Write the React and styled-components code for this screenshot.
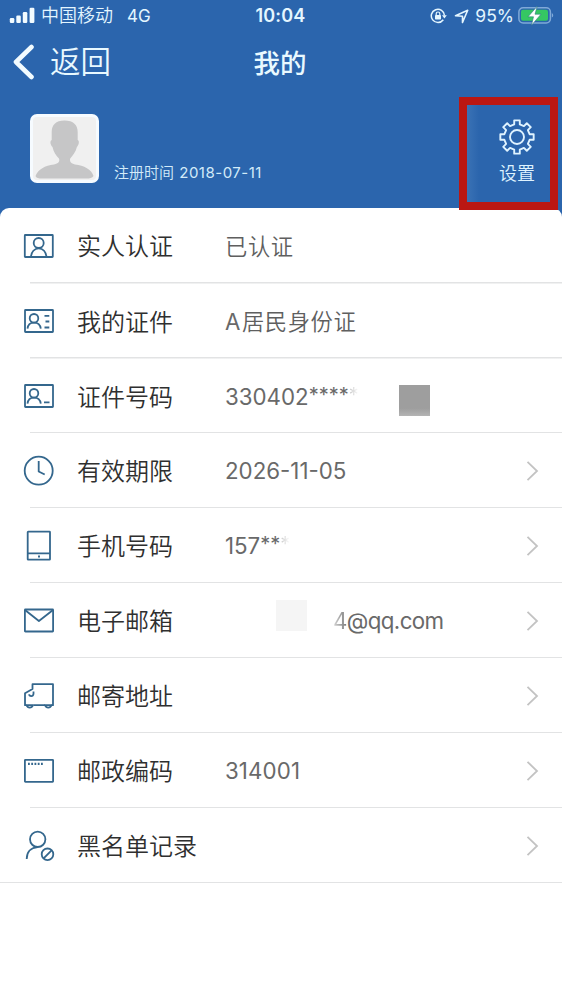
import styled, { createGlobalStyle } from 'styled-components';

const GlobalStyle = createGlobalStyle`
  * {
    box-sizing: border-box;
  }
  body {
    margin: 0;
    background: #fff;
    font-family: Inter, "Noto Sans CJK SC", sans-serif;
  }
`;

const Page = styled.div`
  width: 562px;
  height: 1000px;
  overflow: hidden;
  background: #2b65ad;
  display: flex;
  flex-direction: column;
`;

const StatusBar = styled.div`
  height: 32px;
  padding: 0 8px 0 9px;
  display: grid;
  grid-template-columns: 1fr auto 1fr;
  align-items: center;
  color: #e4f6ff;
  font-size: 17px;
  line-height: 32px;
`;

const StatusGroup = styled.div`
  display: flex;
  align-items: center;
  justify-content: ${(props) => (props.$end ? 'flex-end' : 'flex-start')};
`;

const Carrier = styled.span`
  margin-left: 6px;
  font-size: 18px;
  font-weight: 350;
`;

const Network = styled.span`
  margin-left: 14px;
  font-size: 17px;
`;

const Clock = styled.span`
  margin-right: 2px;
  font-size: 18px;
  font-weight: 600;
  letter-spacing: 0.2px;
`;

const BatteryText = styled.span`
  margin: 0 4px 0 6px;
  font-size: 17.5px;
`;

const NavBar = styled.div`
  height: 64px;
  padding: 0 15px 5px 13px;
  display: grid;
  grid-template-columns: 1fr auto 1fr;
  align-items: center;
  color: #e9f9ff;
  line-height: 58px;
`;

const Back = styled.div`
  display: flex;
  align-items: center;
  gap: 16px;
  font-size: 30.5px;
  font-weight: 350;
`;

const Title = styled.div`
  padding-top: 2px;
  font-size: 26.5px;
  font-weight: 500;
`;

const Profile = styled.div`
  height: 112px;
  padding-left: 30px;
  display: flex;
`;

const Avatar = styled.div`
  width: 69px;
  height: 69px;
  margin-top: 18px;
  border: 3px solid #f6fbff;
  border-radius: 7px;
  background: #f0f0f0;
  overflow: hidden;

  > svg {
    display: block;
  }
`;

const Registered = styled.div`
  margin: 66px 0 0 15px;
  color: #d3ebf9;
  font-size: 15px;
  font-weight: 350;
  line-height: 22px;
  white-space: pre;
`;

const RegisteredDate = styled.span`
  margin-left: 1px;
  font-weight: 400;
  letter-spacing: 0.5px;
`;

const Settings = styled.div`
  width: 99px;
  height: 113px;
  margin: 1px 4px 0 auto;
  border: 8px solid #bb1712;
  background: linear-gradient(90deg, #3a72b5, #2b65ad 12px);
  display: flex;
  flex-direction: column;
  align-items: center;
  padding: 14px 0 0 17px;
  position: relative;
  z-index: 1;
  color: #dff3ff;
  font-size: 18px;
  font-weight: 350;
  line-height: 24px;

  > svg {
    margin-bottom: 7px;
  }
`;

const Sheet = styled.div`
  flex: 1;
  border-radius: 9px 9px 0 0;
  background: #fff;
`;

const Row = styled.div`
  height: 74.95px;
  display: flex;
  padding-left: 23px;
  background: linear-gradient(#e2e3e4, #e2e3e4) right bottom / ${(props) => (props.$last ? '562px' : '532px')} 1.5px no-repeat;

  &:first-child {
    height: 75.6px;
  }
`;

const RowIcon = styled.div`
  width: 54px;
  display: flex;
  align-items: center;
`;

const Label = styled.div`
  width: 148px;
  color: #2f2f2f;
  font-size: 24px;
  font-weight: 350;
  line-height: 78px;
  white-space: nowrap;
`;

const Value = styled.div`
  flex: 1;
  display: flex;
  align-items: center;
  padding-top: 1px;
  color: #696969;
  font-size: 22.3px;
  line-height: 74px;
  letter-spacing: ${(props) => props.$spacing || '0'};
  white-space: nowrap;
`;

const Chinese = styled.span`
  padding-top: 1px;
  color: #5f5f5f;
  font-weight: 350;
  letter-spacing: 0.6px;
`;

const Stars = styled.span`
  margin-top: -4px;
  font-size: 20px;
`;

const Faded = styled.span`
  color: transparent;
  background: linear-gradient(90deg, ${(props) => props.$from}, ${(props) => props.$to});
  background-clip: text;
`;

const FadedStar = styled(Faded)`
  margin-top: -4px;
  font-size: 20px;
`;

const Mask = styled.span`
  width: 31px;
  height: 31px;
  margin: ${(props) => props.$margin};
  background: ${(props) => props.$fill};
`;

const Arrow = styled.div`
  width: 36px;
  display: flex;
  align-items: center;
`;

function Line({ children }) {
  return (
    <svg width="32" height="32" viewBox="0 0 32 32" fill="none" stroke="#34678d" strokeWidth="1.8" strokeLinejoin="round">
      {children}
    </svg>
  );
}

const icons = {
  person: (
    <Line>
      <rect x="1.8" y="5" width="28" height="22" rx="0.5" />
      <circle cx="15.7" cy="13" r="5" />
      <path d="M8 27c.2-5 3.5-8.7 7.7-8.7s7.5 3.7 7.7 8.7" />
    </Line>
  ),
  card: (
    <Line>
      <rect x="2" y="5" width="28" height="22" rx="0.5" />
      <circle cx="11" cy="13.3" r="4.3" />
      <path d="M4.5 23.7c.4-4.100 3-6.100 6.500-6.100s6.300 2.300 6.800 6.100M21.500 10.800h4.800M22.500 16.500h3.800M21.500 22.500h4.800" />
    </Line>
  ),
  number: (
    <Line>
      <rect x="2" y="5" width="28" height="22" rx="0.5" />
      <circle cx="11" cy="13.3" r="4.3" />
      <path d="M4.5 23.7c.4-4.100 3-6.100 6.500-6.100s6.300 2.300 6.800 6.100M21 22.300h5.500" />
    </Line>
  ),
  clock: (
    <Line>
      <circle cx="15.7" cy="15.7" r="14" />
      <path d="M15.7 6v10.500l6 3" />
    </Line>
  ),
  phone: (
    <Line>
      <rect x="4.7" y="1.7" width="22.3" height="28" rx="0.5" />
      <path d="M4.7 23.300H27M15 26.500h2" />
    </Line>
  ),
  mail: (
    <Line>
      <rect x="1.9" y="4.5" width="28.2" height="22" rx="0.5" />
      <path d="M2 5l13.900 11L30 5" />
    </Line>
  ),
  truck: (
    <Line>
      <path d="M3.500 25.200H2v-12l7.500-4.200V4.200H30v21h-1.500M10.500 25.200H22M10.500 11.500v2.300c0 3.200-4.300 2.600-4.300.4" />
      <path d="M3.500 25.200c1.300 3.200 5.200 3.200 6.500 0zM22 25.200c1.300 3.200 5.200 3.200 6.500 0z" />
    </Line>
  ),
  postcode: (
    <Line>
      <rect x="1.9" y="4.8" width="28.2" height="22" rx="0.5" />
      <path d="M5 8.800h15" strokeWidth="2.2" strokeDasharray="1.8 1.45" />
    </Line>
  ),
  blocked: (
    <Line>
      <circle cx="14.7" cy="9.3" r="7.7" />
      <path d="M3.700 29c0-6.300 3.500-11.500 11-11.900" />
      <circle cx="24.5" cy="24.3" r="5.8" />
      <path d="M20.600 28.300l8-8" />
    </Line>
  ),
};

const rows = [
  { icon: 'person', label: '实人认证', value: <Chinese>已认证</Chinese> },
  {
    icon: 'card',
    label: '我的证件',
    value: (
      <>
        A<Chinese>居民身份证</Chinese>
      </>
    ),
    spacing: '1.5px',
  },
  {
    icon: 'number',
    label: '证件号码',
    value: (
      <>
        330402
        <Stars>****</Stars>
        <FadedStar $from="#c4c4c4" $to="#ffffff">*</FadedStar>
        <Mask $margin="8px 0 0 40px" $fill="linear-gradient(#9e9e9e 75%, #b4b4b4)" />
      </>
    ),
  },
  { icon: 'clock', label: '有效期限', value: '2026-11-05', arrow: true },
  {
    icon: 'phone',
    label: '手机号码',
    value: (
      <>
        157
        <Stars>**</Stars>
        <FadedStar $from="#c4c4c4" $to="#ffffff">*</FadedStar>
      </>
    ),
    arrow: true,
  },
  {
    icon: 'mail',
    label: '电子邮箱',
    value: (
      <>
        <Mask $margin="-11px 26px 0 51px" $fill="#f5f5f5" />
        <Faded $from="#d8d8d8" $to="#777777">4</Faded>
        @qq.com
      </>
    ),
    spacing: '-0.6px',
    arrow: true,
  },
  { icon: 'truck', label: '邮寄地址', arrow: true },
  { icon: 'postcode', label: '邮政编码', value: '314001', spacing: '0.1px', arrow: true },
  { icon: 'blocked', label: '黑名单记录', arrow: true },
];

// eight teeth, alternating between the outer and the inner radius
function gearPath(outer, inner) {
  const points = [];
  for (let i = 0; i < 8; i++) {
    [[-12.5, inner], [-9.5, outer], [9.5, outer], [12.5, inner]].forEach(([offset, radius]) => {
      const angle = ((i * 45 + offset) * Math.PI) / 180;
      points.push(`${(18 + radius * Math.sin(angle)).toFixed(2)} ${(18 - radius * Math.cos(angle)).toFixed(2)}`);
    });
  }
  return `M${points.join('L')}Z`;
}

function Gear() {
  return (
    <svg width="36" height="36" viewBox="0 0 36 36" fill="none" stroke="#dff3ff" strokeWidth="1.9" strokeLinejoin="round">
      <path d={gearPath(16.9, 12.9)} />
      <circle cx="18" cy="18" r="7" />
    </svg>
  );
}

function Signal() {
  return (
    <svg width="26" height="18" viewBox="0 0 26 18" fill="#f2fbff">
      <rect x="0.8" y="11" width="4.5" height="5" rx="1.2" />
      <rect x="7.3" y="8.5" width="4.5" height="7.5" rx="1.2" />
      <rect x="13.8" y="5" width="4.5" height="11" rx="1.2" />
      <rect x="20.6" y="0.8" width="4.8" height="15.2" rx="1.2" />
    </svg>
  );
}

function RotationLock() {
  return (
    <svg width="17" height="16" viewBox="0 0 17 16" fill="none" stroke="#e4f6ff" strokeWidth="1.5">
      <path d="M13.300 11.700A6.600 6.600 0 1 1 14.500 7.500" />
      <path d="M12 7.200h4.800l-2.400 3.200z" fill="#e4f6ff" stroke="none" />
      <rect x="5" y="7" width="6" height="4.5" rx="0.7" fill="#e4f6ff" stroke="none" />
      <path d="M6.200 7.200V5.800a1.800 1.800 0 0 1 3.600 0v1.400" strokeWidth="1.2" />
    </svg>
  );
}

const Location = styled.svg`
  margin-left: 7px;
`;

function Battery() {
  return (
    <svg width="36" height="20" viewBox="0 0 36 20">
      <rect x="0.9" y="1.7" width="31.5" height="15.2" rx="4.2" fill="none" stroke="#7fa9d8" strokeWidth="1.5" />
      <rect x="3" y="3.8" width="27" height="11" rx="2" fill="#35c763" />
      <path d="M33.800 7c1.900.8 1.900 3.800 0 4.600z" fill="#7fa9d8" />
      <path d="M19.200 0.300L10 10.800h5.500l-2 8.400 9.500-11h-6z" fill="#fff" stroke="#2b7b83" strokeWidth="0.6" />
    </svg>
  );
}

export default function App() {
  return (
    <Page>
      <GlobalStyle />
      <StatusBar>
        <StatusGroup>
          <Signal />
          <Carrier>中国移动</Carrier>
          <Network>4G</Network>
        </StatusGroup>
        <Clock>10:04</Clock>
        <StatusGroup $end>
          <RotationLock />
          <Location width="15" height="15" viewBox="0 0 15 15" fill="none" stroke="#e4f6ff" strokeWidth="1.6" strokeLinejoin="round">
            <path d="M13.700 1.300L8.500 13.500V7.200L1.500 6.800z" />
          </Location>
          <BatteryText>95%</BatteryText>
          <Battery />
        </StatusGroup>
      </StatusBar>
      <NavBar>
        <Back>
          <svg width="21" height="36" viewBox="0 0 21 36" fill="none" stroke="#f2fbff" strokeWidth="4.6" strokeLinecap="round" strokeLinejoin="round">
            <path d="M18.500 3L3 18l15.500 15" />
          </svg>
          返回
        </Back>
        <Title>我的</Title>
      </NavBar>
      <Profile>
        <Avatar>
          <svg width="63" height="63" viewBox="0 0 63 63" fill="#c6c6c7">
            <path d="M31.500 3.500c9 0 13.200 4.500 13.200 11.500v8c2.200 1 1 5-.8 7-1 5-4.400 8.500-6.700 11.500-.8 3 .8 5 4.800 6 9 1 16.500 5 18.500 11.500-1 2-4 2.500-7 2.500h-44c-4 0-6.500-.5-7-2.500 2.500-6.500 9.500-10.500 18.500-11.500 4.500-1 6-3 5-6-3-3-5.500-6.500-6.500-11.500-2-2-3-6-.8-7v-8c0-7 4-11.500 12.800-11.500z" />
          </svg>
        </Avatar>
        <Registered>
          注册时间 <RegisteredDate>2018-07-11</RegisteredDate>
        </Registered>
        <Settings>
          <Gear />
          设置
        </Settings>
      </Profile>
      <Sheet>
        {rows.map((row, index) => (
          <Row key={row.label} $last={index === rows.length - 1}>
            <RowIcon>{icons[row.icon]}</RowIcon>
            <Label>{row.label}</Label>
            <Value $spacing={row.spacing}>{row.value}</Value>
            {row.arrow && (
              <Arrow>
                <svg width="13" height="22" viewBox="0 0 13 22" fill="none" stroke="#c3c3c3" strokeWidth="1.8">
                  <path d="M1.500 1.800l9.500 9.200-9.500 9.200" />
                </svg>
              </Arrow>
            )}
          </Row>
        ))}
      </Sheet>
    </Page>
  );
}
